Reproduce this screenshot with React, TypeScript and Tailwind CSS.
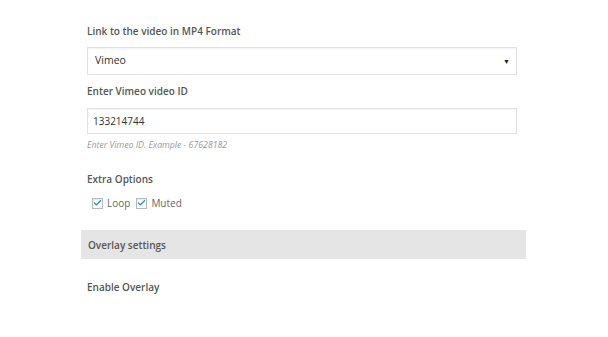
import { Check } from 'lucide-react';

const font = { fontFamily: "'Open Sans', 'Liberation Sans', sans-serif" };

function Checkbox({ label }: { label: string }) {
  return (
    <label className="flex items-center gap-[4px] text-[10px] text-[#666] leading-[16px]">
      <span className="w-[11px] h-[11px] border border-[#b4b9be] bg-white flex items-center justify-center shadow-[inset_0_1px_2px_rgba(0,0,0,0.1)]">
        <Check className="w-[10px] h-[10px] text-[#1e8cbe]" strokeWidth={3.5} />
      </span>
      {label}
    </label>
  );
}

export default function App() {
  return (
    <div className="min-h-screen bg-white" style={font}>
      <div className="ml-[81px] w-[445px] pt-[23px]">
        <div className="px-[6px]">
          <p className="text-[10px] font-semibold text-[#555] leading-[16px]">Link to the video in MP4 Format</p>
          <div className="mt-[8px] w-[430px] h-[28px] border border-[#e1e1e1] flex items-center justify-between pl-[7px] pr-[6px] shadow-[inset_0_1px_2px_rgba(0,0,0,0.05)]">
            <span className="text-[10.5px] text-[#333]">Vimeo</span>
            <span className="text-[7px] text-[#222] leading-none">▼</span>
          </div>

          <p className="mt-[8px] text-[10px] font-semibold text-[#555] leading-[16px]">Enter Vimeo video ID</p>
          <div className="mt-[9px] w-[430px] h-[26px] border border-[#e1e1e1] flex items-center pl-[5px] shadow-[inset_0_1px_2px_rgba(0,0,0,0.05)]">
            <span className="text-[10px] text-[#333]">133214744</span>
          </div>
          <p className="mt-[4px] text-[8.75px] italic text-[#999] leading-[14px]">Enter Vimeo ID. Example - 67628182</p>

          <p className="mt-[19px] text-[10px] font-semibold text-[#555] leading-[16px]">Extra Options</p>
          <div className="mt-[8px] h-[16px] flex items-center gap-[6px] pl-[5px]">
            <Checkbox label="Loop" />
            <Checkbox label="Muted" />
          </div>
        </div>

        <div className="mt-[19px] h-[29px] bg-[#e5e5e5] flex items-center px-[7px] pt-[2px]">
          <span className="text-[10px] font-semibold text-[#555]">Overlay settings</span>
        </div>

        <div className="px-[6px] pt-[20px]">
          <p className="text-[10px] font-semibold text-[#555] leading-[16px]">Enable Overlay</p>
        </div>
      </div>
    </div>
  );
}
